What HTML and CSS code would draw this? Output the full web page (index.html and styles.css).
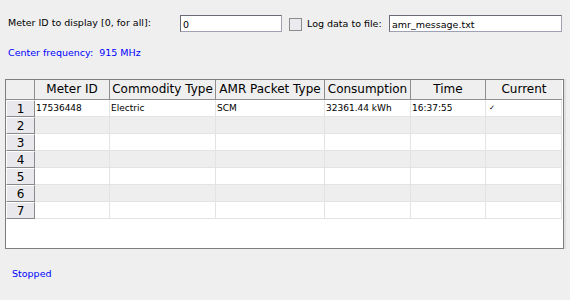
FILE: index.html
```html
<!DOCTYPE html>
<html>
<head>
<meta charset="utf-8">
<link rel="stylesheet" href="styles.css">
</head>
<body>
<div class="app">
  <div class="top">
    <span class="lbl-id">Meter ID to display [0, for all]:</span>
    <input class="field field-id" type="text" value="0">
    <span class="check"></span>
    <span class="lbl-log">Log data to file:</span>
    <input class="field field-file" type="text" value="amr_message.txt">
  </div>
  <div class="freq">Center frequency:&nbsp; 915 MHz</div>
  <div class="table-box">
    <table class="grid">
      <colgroup>
        <col style="width:29px"><col style="width:75px"><col style="width:106px"><col style="width:109px"><col style="width:86px"><col style="width:75px"><col style="width:76px">
      </colgroup>
      <thead>
        <tr><th class="corner"></th><th>Meter ID</th><th>Commodity Type</th><th>AMR Packet Type</th><th>Consumption</th><th>Time</th><th>Current</th></tr>
      </thead>
      <tbody>
        <tr><th class="rh">1</th><td>17536448</td><td>Electric</td><td>SCM</td><td>32361.44 kWh</td><td>16:37:55</td><td class="tick">✓</td></tr>
        <tr class="alt"><th class="rh">2</th><td></td><td></td><td></td><td></td><td></td><td></td></tr>
        <tr><th class="rh">3</th><td></td><td></td><td></td><td></td><td></td><td></td></tr>
        <tr class="alt"><th class="rh">4</th><td></td><td></td><td></td><td></td><td></td><td></td></tr>
        <tr><th class="rh">5</th><td></td><td></td><td></td><td></td><td></td><td></td></tr>
        <tr class="alt"><th class="rh">6</th><td></td><td></td><td></td><td></td><td></td><td></td></tr>
        <tr><th class="rh">7</th><td></td><td></td><td></td><td></td><td></td><td></td></tr>
      </tbody>
    </table>
  </div>
  <div class="status">Stopped</div>
</div>
</body>
</html>
```
FILE: styles.css
```css
html, body {
  margin: 0;
  padding: 0;
  background: #efefef;
}
.app {
  width: 570px;
  height: 300px;
  font-family: "DejaVu Sans", sans-serif;
  font-size: 9.5px;
  color: #000;
}
.top {
  display: flex;
  align-items: center;
  height: 17px;
  padding: 15px 8px 0 8px;
}
.lbl-id {
  width: 172px;
  flex: 0 0 172px;
  margin-top: -3px;
}
.field {
  box-sizing: border-box;
  height: 17px;
  margin: 0;
  padding: 1px 2px 0 2px;
  font-family: "DejaVu Sans", sans-serif;
  font-size: 9.5px;
  color: #000;
  background: #fff;
  border: 1px solid #a0a0b4;
  border-top-color: #6a6a78;
  border-left-color: #6a6a78;
  outline: none;
}
.field-id {
  flex: 0 0 102px;
  width: 102px;
}
.check {
  box-sizing: border-box;
  flex: 0 0 13px;
  width: 13px;
  height: 13px;
  margin-left: 7px;
  margin-top: 1px;
  background: #ebebef;
  border: 1px solid #8c8c8c;
}
.lbl-log {
  margin-left: 5px;
}
.field-file {
  flex: 0 0 173px;
  width: 173px;
  margin-left: auto;
}
.freq {
  color: #0000ff;
  margin: 15px 0 0 8px;
  height: 12px;
  line-height: 12px;
}
.table-box {
  box-sizing: border-box;
  margin: 20px 0 0 5px;
  width: 559px;
  height: 170px;
  background: #fff;
  border: 1px solid #7e7e7e;
  box-shadow: 2px 0 0 #e0e0e0;
}
.grid {
  table-layout: fixed;
  border-collapse: separate;
  border-spacing: 0;
  width: 556px;
}
.grid th, .grid td {
  padding: 0;
  overflow: hidden;
  white-space: nowrap;
}
.grid thead th {
  height: 19px;
  background: #efefef;
  border-right: 1px solid #8e8e8e;
  border-bottom: 1px solid #8e8e8e;
  font-weight: normal;
  font-size: 12px;
  text-align: center;
  line-height: 19px;
}
.grid thead th:last-child {
  border-right: none;
}
.grid thead th.corner {
  background: #efefef;
}
.grid tbody td {
  height: 16px;
  line-height: 16px;
  border-right: 1px solid #e3e3e3;
  border-bottom: 1px solid #e3e3e3;
  padding-left: 1px;
  font-size: 9px;
  vertical-align: middle;
}
.grid tbody tr.alt td {
  background: #eeeeee;
}
.grid tbody th.rh {
  box-sizing: border-box;
  height: 17px;
  background: #e9e8ec;
  border-top: 1px solid #ffffff;
  border-left: 1px solid #ffffff;
  border-right: 1px solid #8a8a8a;
  border-bottom: 1px solid #8a8a8a;
  font-weight: normal;
  font-size: 12px;
  line-height: 14px;
  text-align: center;
}
.grid tbody td.tick {
  font-size: 7px;
  padding-left: 3px;
}
.status {
  color: #0000ff;
  margin: 19px 0 0 12px;
  line-height: 12px;
}
```
